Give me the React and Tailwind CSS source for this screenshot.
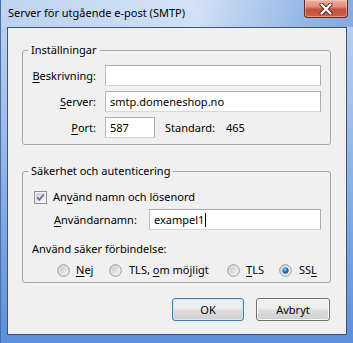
import React from "react";

// access key underline, like Windows draws it
const Key = ({ children }) => (
  <span className="underline decoration-[1px] underline-offset-[2px]">{children}</span>
);

const TextBox = ({ width, children }) => (
  <div
    className={`${width} h-[21px] flex items-center bg-white border border-[#abadb3] border-l-[#b9bcc3] border-b-[#d3d7de] px-[4px] whitespace-nowrap`}
  >
    {children}
  </div>
);

const Radio = ({ checked }) => (
  <svg width="13" height="13" viewBox="0 0 13 13" className="shrink-0">
    <defs>
      <linearGradient id="rOut" x1="0" y1="0" x2="1" y2="1">
        <stop offset="0" stopColor="#d6d6d6" />
        <stop offset="1" stopColor="#f8f8f8" />
      </linearGradient>
      <linearGradient id="rIn" x1="0" y1="0" x2="1" y2="1">
        <stop offset="0" stopColor="#c9c9c9" />
        <stop offset="1" stopColor="#f2f2f2" />
      </linearGradient>
      <radialGradient id="rDot" cx="0.4" cy="0.35" r="0.7">
        <stop offset="0" stopColor="#9fd6f6" />
        <stop offset="0.5" stopColor="#2b78c4" />
        <stop offset="1" stopColor="#123d76" />
      </radialGradient>
    </defs>
    <circle cx="6.5" cy="6.5" r="5.8" fill="url(#rOut)" stroke="#909090" strokeWidth="0.9" />
    <circle cx="6.5" cy="6.5" r="3.6" fill="url(#rIn)" />
    {checked && <circle cx="6.5" cy="6.5" r="3.1" fill="url(#rDot)" />}
  </svg>
);

const CheckBox = () => (
  <svg width="13" height="13" viewBox="0 0 13 13" className="shrink-0">
    <defs>
      <linearGradient id="cbIn" x1="0" y1="0" x2="1" y2="1">
        <stop offset="0" stopColor="#cfcfcf" />
        <stop offset="1" stopColor="#f6f6f6" />
      </linearGradient>
    </defs>
    <rect x="0.5" y="0.5" width="12" height="12" fill="#f4f4f4" stroke="#8f8f8f" />
    <rect x="2" y="2" width="9" height="9" fill="url(#cbIn)" />
    <path d="M3.2 6.4 L5.4 8.8 L9.8 3.4" fill="none" stroke="#5468a6" strokeWidth="1.6" />
  </svg>
);

const Button = ({ width, primary, children }) => (
  <div
    className={`${width} h-[23px] flex items-center justify-center rounded-[3px] border ${
      primary
        ? "border-[#3c7fb1] shadow-[inset_0_0_0_1px_#c5ebff]"
        : "border-[#707070] shadow-[inset_0_0_0_1px_#fbfbfb]"
    } bg-[linear-gradient(180deg,#f2f2f2_0%,#ebebeb_48%,#dddddd_52%,#cfcfcf_100%)]`}
  >
    {children}
  </div>
);

export default function App() {
  return (
    <div className="w-[353px] h-[343px] flex flex-col overflow-hidden text-[11px] leading-[16px] text-black font-['Noto_Sans',sans-serif] bg-[linear-gradient(180deg,#bcd3f0_0%,#a9c5ec_25%,#7ea8e3_65%,#5b8edb_100%)] border-l border-[#4a6fa8]">
      {/* Title bar */}
      <div className="h-[27px] shrink-0 flex justify-between bg-[linear-gradient(90deg,rgba(255,255,255,0.05)_0%,rgba(255,255,255,0.35)_55%,rgba(90,140,215,0.35)_85%,rgba(60,110,200,0.4)_100%)]">
        <div className="pl-[7px] self-center pb-[1px]">Server för utgående e-post (SMTP)</div>
        <div className="mr-[5px] w-[44px] h-[18px] flex items-center justify-center rounded-b-[4px] border border-t-0 border-[#5e2a22] bg-[linear-gradient(180deg,#eab3a4_0%,#dd8a77_40%,#c4503b_55%,#c8604a_100%)] shadow-[inset_0_0_0_1px_rgba(255,210,200,0.5)]">
          <svg width="14" height="12" viewBox="0 0 14 12">
            <path d="M2.5 1.5 L11.5 10.5 M11.5 1.5 L2.5 10.5" stroke="#5a2a24" strokeWidth="4" strokeLinecap="round" />
            <path d="M2.5 1.5 L11.5 10.5 M11.5 1.5 L2.5 10.5" stroke="#ffffff" strokeWidth="2.2" strokeLinecap="round" />
          </svg>
        </div>
      </div>

      {/* Client area */}
      <div className="mx-[6px] h-[308px] shrink-0 border border-[#3f5477] bg-[#f0f0f0] pl-[14px] pr-[15px] pt-[14px] flex flex-col">
        {/* Inställningar */}
        <fieldset className="border border-[#a6a6a6] rounded-[3px] pb-[6px]">
          <legend className="ml-[5px] px-[3px] leading-[16px]">Inställningar</legend>
          <div className="mt-[7px] flex flex-col gap-[5px]">
            <div className="flex items-center">
              <div className="w-[73px] text-right">
                <Key>B</Key>eskrivning:
              </div>
              <div className="ml-[9px]">
                <TextBox width="w-[216px]" />
              </div>
            </div>
            <div className="flex items-center">
              <div className="w-[73px] text-right">
                <Key>S</Key>erver:
              </div>
              <div className="ml-[9px]">
                <TextBox width="w-[216px]">smtp.domeneshop.no</TextBox>
              </div>
            </div>
            <div className="flex items-center">
              <div className="w-[73px] text-right">
                <Key>P</Key>ort:
              </div>
              <div className="ml-[9px]">
                <TextBox width="w-[50px]">587</TextBox>
              </div>
              <div className="ml-[10px] w-[61px]">Standard:</div>
              <div>465</div>
            </div>
          </div>
        </fieldset>

        {/* Säkerhet och autenticering */}
        <fieldset className="mt-[18px] border border-[#a6a6a6] rounded-[3px] pb-[4px]">
          <legend className="ml-[5px] px-[3px] leading-[16px]">Säkerhet och autenticering</legend>
          <div className="mt-[10px] h-[16px] pl-[11px] flex items-center gap-[6px]">
            <CheckBox />
            <div>
              An<Key>v</Key>änd namn och lösenord
            </div>
          </div>
          <div className="mt-[4px] pl-[31px] flex items-center">
            <div className="w-[95px]">
              <Key>A</Key>nvändarnamn:
            </div>
            <TextBox width="w-[172px]">
              exampel1
              <span className="ml-[1px] w-[1px] h-[14px] bg-black" />
            </TextBox>
          </div>
          <div className="mt-[11px] pl-[9px] h-[16px]">Använd säker förbindelse:</div>
          <div className="mt-[5px] h-[16px] pl-[34px] flex items-center">
            <div className="w-[52px] flex items-center gap-[6px]">
              <Radio />
              <span>
                <Key>N</Key>ej
              </span>
            </div>
            <div className="w-[118px] flex items-center gap-[7px]">
              <Radio />
              <span>
                TLS, <Key>o</Key>m möjligt
              </span>
            </div>
            <div className="w-[52px] flex items-center gap-[6px]">
              <Radio />
              <span>
                <Key>T</Key>LS
              </span>
            </div>
            <div className="flex items-center gap-[7px]">
              <Radio checked />
              <span>
                SS<Key>L</Key>
              </span>
            </div>
          </div>
        </fieldset>

        {/* Buttons */}
        <div className="mt-[15px] pr-[1px] flex justify-end gap-[12px]">
          <Button width="w-[72px]" primary>
            OK
          </Button>
          <Button width="w-[74px]">Avbryt</Button>
        </div>
      </div>
    </div>
  );
}
